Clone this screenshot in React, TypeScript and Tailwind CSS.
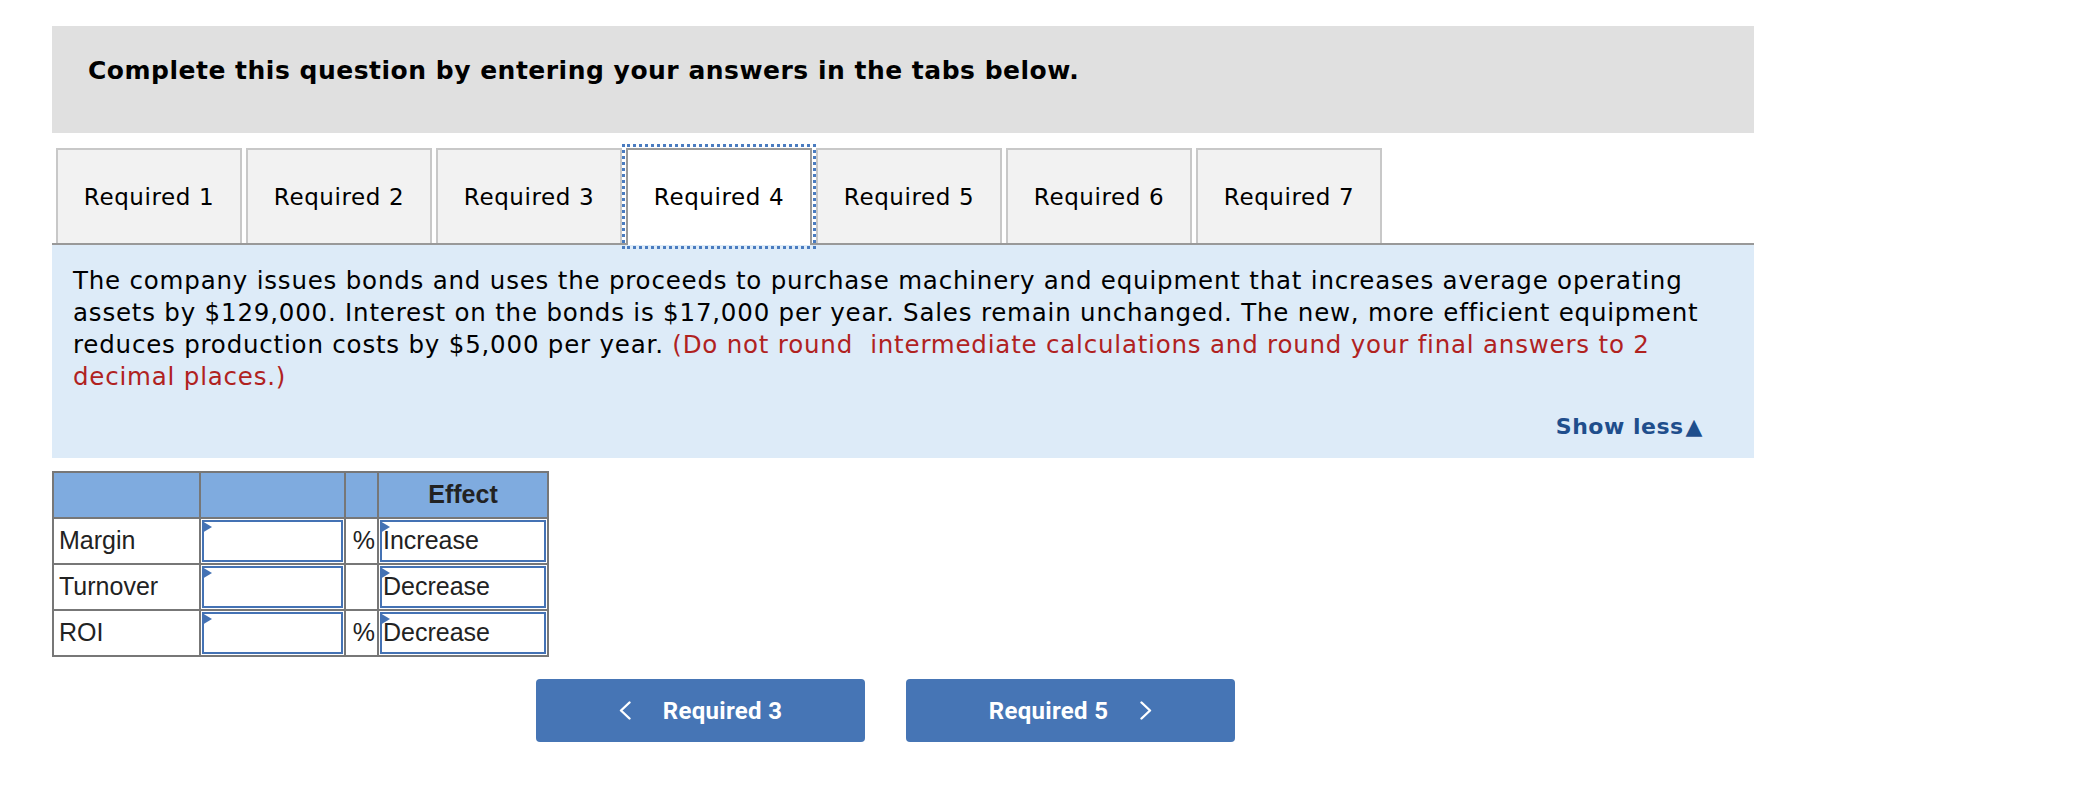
const tabs = ["Required 1", "Required 2", "Required 3", "Required 4", "Required 5", "Required 6", "Required 7"];
const activeTab = 3;

const rows = [
  { label: "Margin", pct: true, effect: "Increase" },
  { label: "Turnover", pct: false, effect: "Decrease" },
  { label: "ROI", pct: true, effect: "Decrease" },
];

// little blue flag in the corner of each answer box
const Flag = () => (
  <svg className="absolute -left-[2px] -top-[1px]" width="10" height="12" viewBox="0 0 10 12">
    <polygon points="0,0 10,6 0,12" fill="#4472b4" />
  </svg>
);

const Chevron = ({ dir }: { dir: "left" | "right" }) => (
  <svg width="12" height="19" viewBox="0 0 12 19" fill="none" stroke="currentColor" strokeWidth="2.4" strokeLinecap="round" strokeLinejoin="round">
    <polyline points={dir === "left" ? "10.5,1.5 2,9.5 10.5,17.5" : "1.5,1.5 10,9.5 1.5,17.5"} />
  </svg>
);

export default function App() {
  return (
    <div className="w-[2080px] h-[800px] bg-white text-black font-['DejaVu_Sans',Verdana,sans-serif]">
      <div className="ml-[52px] w-[1702px] pt-[26px]">
        {/* Header */}
        <div className="h-[107px] bg-[#e0e0e0] pl-[36px] pt-[30px]">
          <h2 className="text-[25px] leading-[30px] font-bold tracking-[0.5px]">
            Complete this question by entering your answers in the tabs below.
          </h2>
        </div>

        {/* Tabs */}
        <div className="mt-[15px] flex gap-[4px] pl-[4px] border-b-2 border-[#999]">
          {tabs.map((t, i) =>
            i === activeTab ? (
              <div
                key={t}
                className="relative z-10 -mb-[2px] w-[186px] h-[97px] flex items-center justify-center bg-white border-2 border-b-0 border-[#9a9a9a] outline-[3px] outline-dotted outline-[#4a7cc0] outline-offset-[1px] text-[23px] tracking-[0.6px]"
              >
                {t}
              </div>
            ) : (
              <div
                key={t}
                className="w-[186px] h-[95px] flex items-center justify-center bg-[#f2f2f2] border-2 border-b-0 border-[#c8c8c8] text-[23px] tracking-[0.6px] pt-[2px]"
              >
                {t}
              </div>
            )
          )}
        </div>

        {/* Description */}
        <div className="bg-[#ddebf8] pt-[20px] pb-[15px] px-[21px]">
          <p className="text-[24.5px] leading-[32px] tracking-[0.8px]">
            The company issues bonds and uses the proceeds to purchase machinery and equipment that increases average operating
            assets by $129,000. Interest on the bonds is $17,000 per year. Sales remain unchanged. The new, more efficient equipment
            reduces production costs by $5,000 per year.{" "}
            <span className="text-[#b0221f]">
              (Do not round&nbsp; intermediate calculations and round your final answers to 2 decimal places.)
            </span>
          </p>
          <div className="mt-[18px] mr-[30px] flex justify-end">
            <span className="text-[22px] leading-[32px] font-bold text-[#1f4e8c] tracking-[0.5px]">
              Show less<span className="ml-[2px]">▲</span>
            </span>
          </div>
        </div>

        {/* Answer table */}
        <table className="mt-[13px] w-[495px] table-fixed border-collapse font-['Liberation_Sans',Arial,sans-serif] text-[25px] text-[#222]">
          <colgroup>
            <col className="w-[147px]" />
            <col className="w-[145px]" />
            <col className="w-[33px]" />
            <col className="w-[170px]" />
          </colgroup>
          <thead>
            <tr className="h-[46px] bg-[#7fabdf]">
              <th className="border-2 border-[#777]" />
              <th className="border-2 border-[#777]" />
              <th className="border-2 border-[#777]" />
              <th className="border-2 border-[#777] font-bold text-center">Effect</th>
            </tr>
          </thead>
          <tbody>
            {rows.map((r) => (
              <tr key={r.label} className="h-[46px]">
                <td className="border-2 border-[#777] pl-[5px] text-left font-normal">{r.label}</td>
                <td className="border-2 border-[#777] p-0">
                  <div className="relative h-[42px] mx-[1px] border-2 border-[#4472b4] bg-white">
                    <Flag />
                  </div>
                </td>
                <td className="border-2 border-[#777] text-right pr-[2px]">{r.pct ? "%" : ""}</td>
                <td className="border-2 border-[#777] p-0">
                  <div className="relative h-[42px] mx-[1px] border-2 border-[#4472b4] bg-white pl-[1px] flex items-center">
                    <Flag />
                    {r.effect}
                  </div>
                </td>
              </tr>
            ))}
          </tbody>
        </table>

        {/* Navigation */}
        <div className="mt-[22px] ml-[484px] flex gap-[41px] font-['Roboto',sans-serif] text-[24px] font-bold tracking-[0.3px] text-white">
          <button className="w-[329px] h-[63px] rounded-[4px] bg-[#4675b5] flex items-center justify-center gap-[32px]">
            <Chevron dir="left" />
            <span>Required 3</span>
          </button>
          <button className="w-[329px] h-[63px] rounded-[4px] bg-[#4675b5] flex items-center justify-center gap-[32px]">
            <span>Required 5</span>
            <Chevron dir="right" />
          </button>
        </div>
      </div>
    </div>
  );
}
